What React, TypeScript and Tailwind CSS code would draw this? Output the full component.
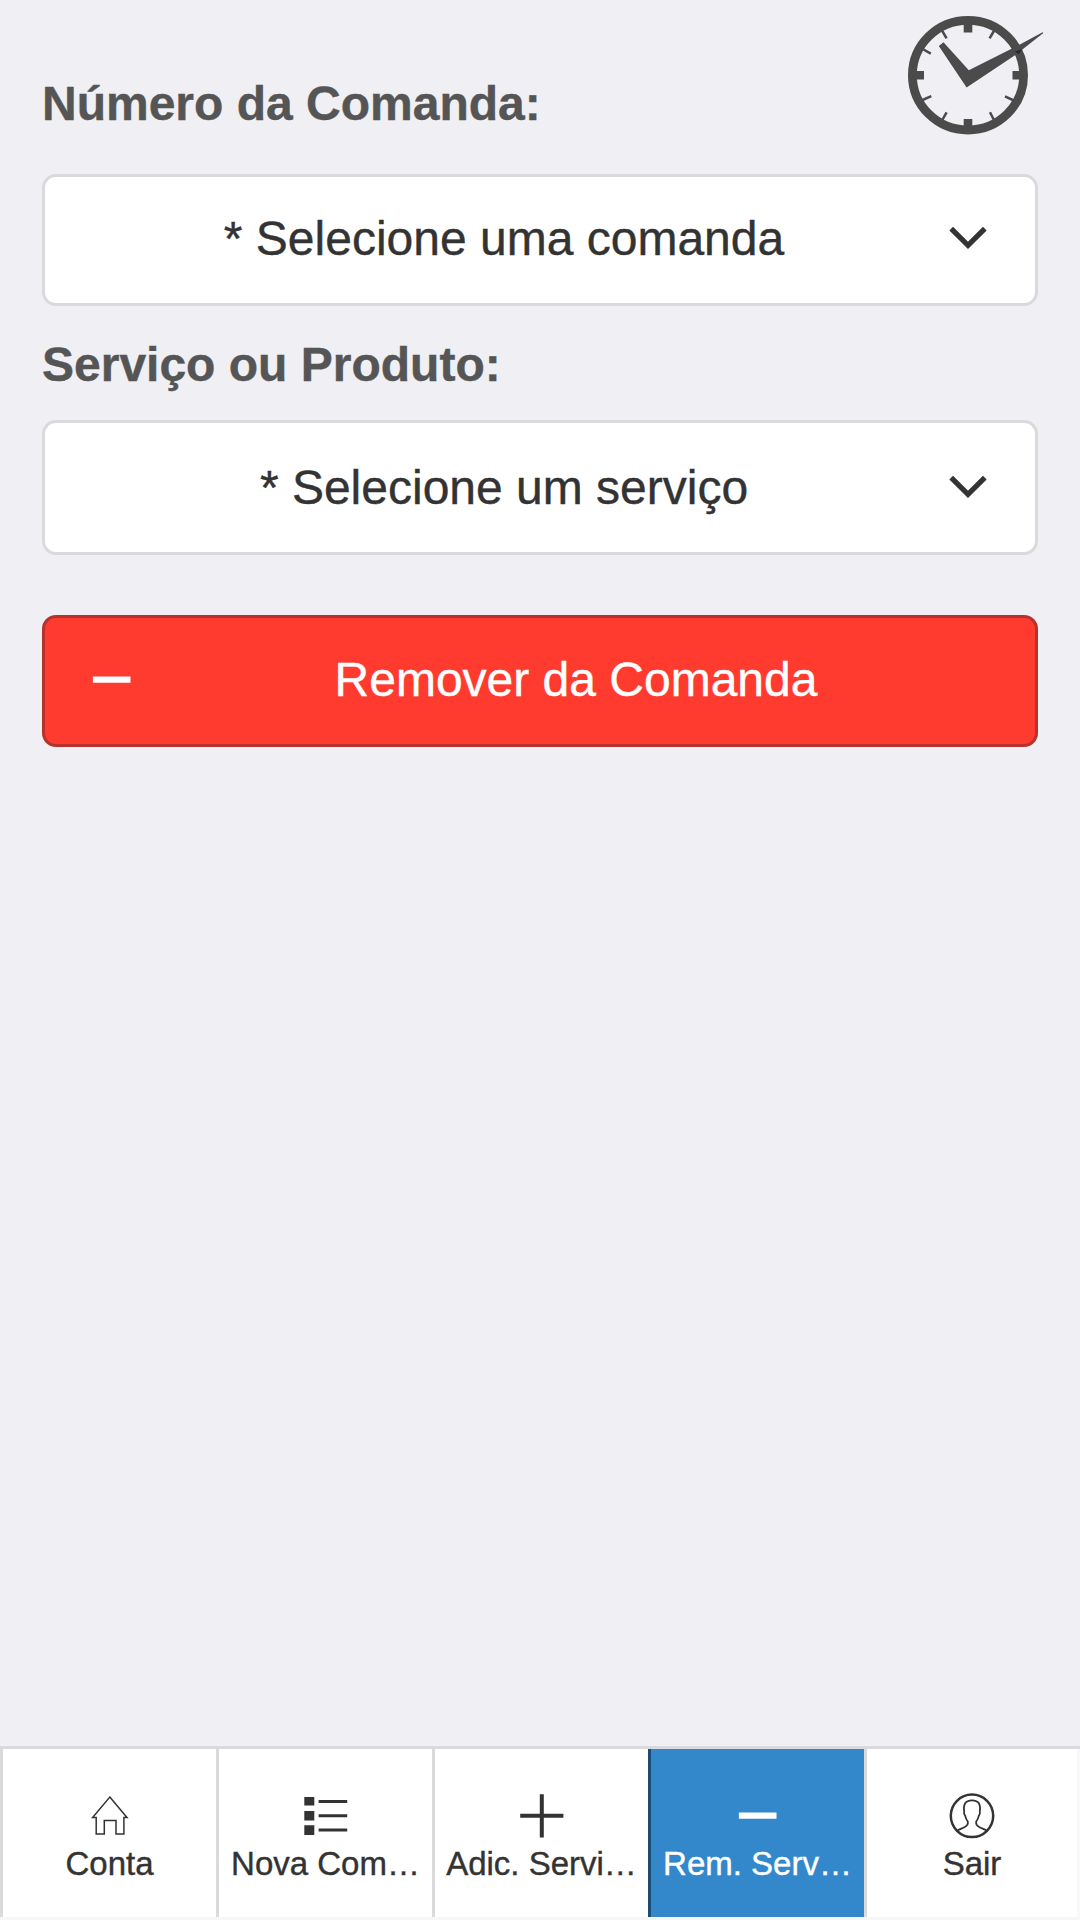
import { useState } from 'react';
import type { ReactNode } from 'react';

const FONT = "font-['Liberation_Sans',Arial,sans-serif]";

function ClockLogo() {
  return (
    <svg className="mt-3 -mr-2 shrink-0" width="146" height="126" viewBox="10 12 146 126" fill="none" aria-hidden="true">
      <ellipse cx="78" cy="75.2" rx="55.6" ry="54.8" stroke="#4b4b4b" strokeWidth="8.8" />
      <path d="M78 20v12.5M78 119v12M22 75.2h12M122.5 75.2h12" stroke="#4b4b4b" strokeWidth="8.6" />
      <path
        d="M52 30.5l4.6 7.8M104.2 30.5l-4.6 7.8M33.5 49.5l7.3 4.2M32.5 100l8.8-3.8M52 120.5l4.6-8.2M104.2 120.5l-4.2-8.2M123.8 100.5l-8.8-4.2"
        stroke="#4b4b4b"
        strokeWidth="2.5"
      />
      <path d="M53.5 42.3L48.8 45.9L76.6 87.5L125 55.3L153.4 33L152.6 32.3L128 45.5L78.8 70.2Z" fill="#4b4b4b" />
      <path d="M125 51.5l7.5-2.5-4 5z" fill="#262626" />
    </svg>
  );
}

function Chevron() {
  return (
    <svg className="mr-[48px] -mt-[2px] shrink-0" width="38" height="24" viewBox="0 0 38 24" fill="none" aria-hidden="true">
      <path d="M2.2 2.6L19 19.4L35.8 2.6" stroke="#333" strokeWidth="5.2" />
    </svg>
  );
}

function HomeIcon() {
  return (
    <svg width="48" height="48" viewBox="0 0 48 48" fill="none" stroke="#333" strokeWidth="1.5" aria-hidden="true">
      <path d="M23.8 5.1L41 25.5H37.9V42H30V28.6H18.3V42H10.2V25.5H6.6Z" />
    </svg>
  );
}

function ListIcon() {
  return (
    <svg width="48" height="48" viewBox="0 0 48 48" aria-hidden="true">
      <path d="M2.3 5h10v8.6h-10zM2.3 19h10v9.5h-10zM2.3 33.2h10v9.8h-10z" fill="#333" />
      <path d="M16.6 9.5h28.6M16.6 23.7h28.6M16.6 38h28.6" stroke="#333" strokeWidth="3" />
    </svg>
  );
}

function PlusIcon() {
  return (
    <svg width="48" height="48" viewBox="0 0 48 48" aria-hidden="true">
      <path d="M2.2 23.8h43.2M23.8 2.2v43.2" stroke="#333" strokeWidth="4" />
    </svg>
  );
}

function MinusIcon() {
  return (
    <svg width="48" height="48" viewBox="0 0 48 48" aria-hidden="true">
      <path d="M4.9 23.7h37.6" stroke="#fff" strokeWidth="6.2" />
    </svg>
  );
}

function PersonIcon() {
  return (
    <svg width="48" height="48" viewBox="0 0 48 48" fill="none" stroke="#333" aria-hidden="true">
      <circle cx="24" cy="23.8" r="21.2" strokeWidth="2.5" />
      <path
        d="M9.6 38.4C13.5 36.2 19.8 35 19.8 31.5V29.5C18 27.5 17.6 25.5 17.2 23.7C16 22.7 15.9 21 16.2 20C15.2 12.8 16.8 8.4 24 8.4C31.2 8.4 32.8 12.8 31.8 20C32.1 21 32 22.7 30.8 23.7C30.4 25.5 30 27.5 28.2 29.5V31.5C28.2 35 34.5 36.2 38.4 38.4"
        strokeWidth="1.8"
      />
    </svg>
  );
}

type Tab = { id: string; label: string; icon: ReactNode };

const TABS: Tab[] = [
  { id: 'conta', label: 'Conta', icon: <HomeIcon /> },
  { id: 'nova', label: 'Nova Com…', icon: <ListIcon /> },
  { id: 'adicionar', label: 'Adic. Servi…', icon: <PlusIcon /> },
  { id: 'remover', label: 'Rem. Serv…', icon: <MinusIcon /> },
  { id: 'sair', label: 'Sair', icon: <PersonIcon /> },
];

export default function App() {
  const [activeTab, setActiveTab] = useState('remover');

  return (
    <div className={`flex h-[1920px] w-full flex-col bg-[#efeff4] text-[#333] [-webkit-text-stroke:0.4px] ${FONT}`}>
      <main className="flex-1 px-[42px] text-[48px] leading-[56px]">
        <div className="flex h-[174px] items-start justify-between">
          <h2 className="mt-[76px] font-bold whitespace-nowrap text-[#555]">Número da Comanda:</h2>
          <ClockLogo />
        </div>
        <button className="flex h-[132px] w-full items-center rounded-[14px] border-3 border-[#dadadc] bg-white pb-[3px]">
          <span className="flex-1 pl-[14px] text-center whitespace-nowrap">* Selecione uma comanda</span>
          <Chevron />
        </button>
        <h2 className="flex h-[114px] items-center pt-[3px] font-bold text-[#555]">Serviço ou Produto:</h2>
        <button className="flex h-[135px] w-full items-center rounded-[14px] border-3 border-[#dadadc] bg-white">
          <span className="flex-1 pl-[14px] text-center whitespace-nowrap">* Selecione um serviço</span>
          <Chevron />
        </button>
        <button className="mt-[60px] flex h-[132px] w-full items-center rounded-[14px] border-3 border-[#b5332c] bg-[#ff3b30] pb-[3px] pl-[43px] text-white">
          <MinusIcon />
          <span className="flex-1 pr-[19px] text-center whitespace-nowrap">Remover da Comanda</span>
        </button>
      </main>

      <nav className="grid h-[174px] grid-cols-5 border-t-3 border-b-3 border-t-[#dadadc] border-b-[#f7f7f7] bg-white">
        {TABS.map((tab) => (
          <button
            key={tab.id}
            onClick={() => setActiveTab(tab.id)}
            aria-pressed={activeTab === tab.id}
            className={`flex flex-col items-center border-l-3 pt-[43px] text-[33px] leading-[38px] last:border-r-3 last:border-r-[#f9f9f9] ${
              activeTab === tab.id ? 'border-l-[#1d4c72] bg-[#3388cc] text-white' : 'border-l-[#dadadc] bg-white'
            }`}
          >
            {tab.icon}
            <span className="mt-[5px] whitespace-nowrap">{tab.label}</span>
          </button>
        ))}
      </nav>
    </div>
  );
}
